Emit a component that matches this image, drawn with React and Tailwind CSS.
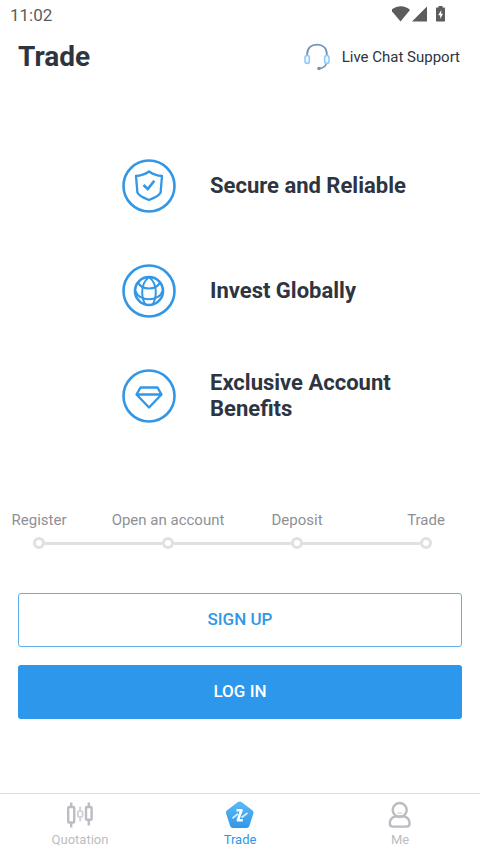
const features = [
  { title: "Secure and Reliable", icon: ShieldIcon },
  { title: "Invest Globally", icon: GlobeIcon },
  { title: "Exclusive Account Benefits", icon: DiamondIcon },
];

const steps = ["Register", "Open an account", "Deposit", "Trade"];

const tabs = [
  { label: "Quotation", icon: CandlesIcon },
  { label: "Trade", icon: TradeIcon, active: true },
  { label: "Me", icon: UserIcon },
];

// ================= Icons =================
function ShieldIcon() {
  return (
    <svg viewBox="0 0 54 54" className="size-[54px] shrink-0" fill="none" stroke="#3197e6" strokeWidth="2.6" aria-hidden="true">
      <circle cx="27" cy="27" r="25.5" />
      <path d="M27 12.500 C31 15.300 35.500 16.800 40 17 L38.600 33.500 C37.500 36 31 39.500 27 41 C23 39.500 16.500 36 15.400 33.500 L14 17 C18.500 16.800 23 15.300 27 12.500 Z" strokeWidth="2.300" strokeLinejoin="round" />
      <path d="M21.500 26 L25.800 30 L32.300 21.800" />
    </svg>
  );
}

function GlobeIcon() {
  return (
    <svg viewBox="0 0 54 54" className="size-[54px] shrink-0" fill="none" stroke="#3197e6" strokeWidth="2.6" aria-hidden="true">
      <circle cx="27" cy="27" r="25.5" />
      <circle cx="27" cy="27" r="14" />
      <g strokeWidth="2">
        <path d="M27 13 C22 17 20.200 22 20.200 28 C20.200 33 21 37 23.500 40.500" />
        <path d="M27 13 C32 17 33.800 22 33.800 28 C33.800 33 33 37 30.500 40.500" />
        <path d="M16 18.500 C20 26.500 34 26.500 38 18.500" />
        <path d="M13.500 27 C16.500 38 37.500 38 40.500 27" />
      </g>
    </svg>
  );
}

function DiamondIcon() {
  return (
    <svg viewBox="0 0 54 54" className="size-[54px] shrink-0" fill="none" stroke="#3197e6" strokeWidth="2.6" aria-hidden="true">
      <circle cx="27" cy="27" r="25.5" />
      <path d="M18.500 18.500 H35.500 L39.500 25.500 L27 38.500 L14.500 25.500 Z M14.500 25.500 H39.500" strokeWidth="2.400" strokeLinejoin="round" />
    </svg>
  );
}

function HeadsetIcon() {
  return (
    <svg viewBox="0 0 26 28" className="h-7 w-[26px]" fill="none" aria-hidden="true">
      <path d="M3.200 13 V11 C3.200 5 7 1.600 13 1.600 C19 1.600 22.800 5 22.800 11 V13" stroke="#7393b8" strokeWidth="1.8" />
      <path d="M22.500 19.500 C22 23.500 19.500 25 15.500 25.500" stroke="#7393b8" strokeWidth="1.8" />
      <circle cx="15" cy="25.500" r="1.800" fill="#7393b8" />
      <rect x="1" y="12.500" width="4.400" height="8" rx="2.200" fill="#eaf6ff" stroke="#8cc8f5" strokeWidth="1.500" />
      <rect x="20.600" y="12.500" width="4.400" height="8" rx="2.200" fill="#eaf6ff" stroke="#8cc8f5" strokeWidth="1.500" />
    </svg>
  );
}

function StatusIcons() {
  return (
    <svg viewBox="0 0 56 18" className="h-[18px] w-14" fill="#5c5c5c" aria-hidden="true">
      <path d="M-1 5 C5 0 13 0 18 5 L8.500 16.500 Z" />
      <path d="M35 1.500 V16.500 H20 Z" />
      <path d="M46.500 1 H50.500 V2.500 H52 C52.700 2.500 53 2.900 53 3.500 V15.500 C53 16.200 52.700 16.500 52 16.500 H45 C44.300 16.500 44 16.200 44 15.500 V3.500 C44 2.900 44.300 2.500 45 2.500 H46.500 Z" />
      <path d="M49.200 5 L46.200 10.200 H48.200 V14 L51 8.800 H49.200 Z" fill="#fff" />
    </svg>
  );
}

function CandlesIcon() {
  return (
    <svg viewBox="0 0 28 28" className="size-7" fill="none" stroke="#bcbdc2" strokeWidth="2.4" aria-hidden="true">
      <rect x="2.200" y="6" width="6" height="15.500" rx="1" />
      <path d="M5.200 1.500 V6 M5.200 21.500 V26.500" />
      <rect x="20" y="6" width="5.600" height="12.800" rx="1" />
      <path d="M22.800 1.500 V6 M22.800 18.800 V24.500" />
      <g stroke="#d3d4d8" strokeWidth="2">
        <rect x="11.800" y="10" width="4.800" height="6" rx="2" />
        <path d="M14.200 5.500 V10 M14.200 16 V20.500" />
      </g>
    </svg>
  );
}

function TradeIcon() {
  return (
    <svg viewBox="0 0 28 28" className="size-7" fill="none" aria-hidden="true">
      <defs>
        <linearGradient id="tradeFill" gradientUnits="userSpaceOnUse" x1="14" y1="0" x2="14" y2="28">
          <stop offset="0" stopColor="#5cbcf3" />
          <stop offset="1" stopColor="#3095e8" />
        </linearGradient>
      </defs>
      <path d="M13.700 3.500 L24.500 11.700 L20.500 24 H7 L3 11.700 Z" fill="url(#tradeFill)" stroke="url(#tradeFill)" strokeWidth="6" strokeLinejoin="round" />
      <path d="M10.500 9.200 H15.500 L11.800 19.300 H16.800" stroke="#fff" strokeWidth="2.600" strokeLinejoin="round" />
      <path d="M6.500 17.200 L12 12.800 M15.500 16.500 L21.500 12" stroke="#d5edfc" strokeWidth="1.800" />
    </svg>
  );
}

function UserIcon() {
  return (
    <svg viewBox="0 0 28 28" className="size-7" fill="none" stroke="#bcbdc2" strokeWidth="2.4" aria-hidden="true">
      <circle cx="13.700" cy="9" r="7" />
      <path d="M9 15.500 C5.500 16.500 3.800 19.500 3.800 22.500 C3.800 24.800 4.800 25.600 7 25.600 H20.400 C22.600 25.600 23.600 24.800 23.600 22.500 C23.600 19.500 22 16.500 18.400 15.500 Z" />
      <path d="M11.500 11.500 C12.500 12.500 15 12.500 16 11.500" strokeWidth="1.200" stroke="#d3d4d8" />
    </svg>
  );
}

export default function App() {
  return (
    <div className="flex min-h-screen flex-col bg-white font-['Roboto',sans-serif] text-[#2e3440]">
      {/* Status bar */}
      <div className="flex h-7 items-center justify-between pr-8 pl-2.5 text-[17px] text-[#5c5c5c]">
        <span className="pt-1">11:02</span>
        <StatusIcons />
      </div>

      {/* Header */}
      <header className="flex h-[58px] items-center justify-between pr-5 pl-[18px]">
        <h1 className="text-[28px] leading-10 font-bold">Trade</h1>
        <a href="#support" className="flex items-center gap-3 text-[15px]">
          <HeadsetIcon />
          Live Chat Support
        </a>
      </header>

      <main>
        {/* Features */}
        <ul className="flex flex-col gap-[51px] pt-[73px] pr-12 pl-[122px]">
          {features.map(({ title, icon: Icon }) => (
            <li key={title} className="flex items-center gap-[34px]">
              <Icon />
              <h2 className="text-[22px] leading-[26px] font-bold">{title}</h2>
            </li>
          ))}
        </ul>

        {/* Steps */}
        <ol className="mt-[85px] mr-12 ml-[33px] flex text-[15px] text-[#8e9096]">
          {steps.map((step) => (
            <li key={step} className="group flex-1 last:flex-none">
              <div className="flex w-3 justify-center leading-6 whitespace-nowrap">{step}</div>
              <div className="mt-[5px] flex items-center">
                <span className="size-3 rounded-full border-3 border-[#e0e0e0]" />
                <span className="h-[3px] flex-1 bg-[#e0e0e0] group-last:hidden" />
              </div>
            </li>
          ))}
        </ol>

        {/* Actions */}
        <div className="mt-11 flex flex-col gap-[18px] px-[18px] text-[17px] font-medium">
          <button type="button" className="h-[54px] rounded-[3px] border border-[#5eaeea] text-[#3197e6]">
            SIGN UP
          </button>
          <button type="button" className="h-[54px] rounded-[3px] bg-[#2c97eb] text-white">
            LOG IN
          </button>
        </div>
      </main>

      {/* Bottom tabs */}
      <nav className="mt-auto grid h-[60px] grid-cols-3 border-t border-[#dedede] text-[13px]">
        {tabs.map(({ label, icon: Icon, active }) => (
          <a
            key={label}
            href={`#${label.toLowerCase()}`}
            aria-current={active ? "page" : undefined}
            className={`flex flex-col items-center pt-[7px] leading-[22px] ${active ? "text-[#3197e6]" : "text-[#bcbdc2]"}`}
          >
            <Icon />
            {label}
          </a>
        ))}
      </nav>
    </div>
  );
}
